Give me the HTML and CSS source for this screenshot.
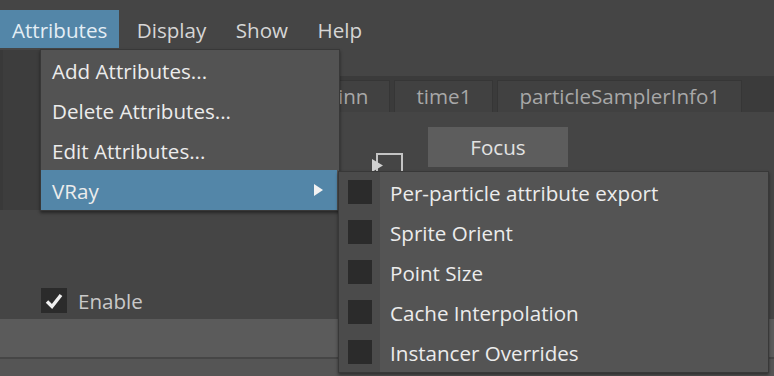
FILE: index.html
```html
<!DOCTYPE html>
<html>
<head>
<meta charset="utf-8">
<link rel="stylesheet" href="styles.css">
</head>
<body>
<div class="app">
  <nav class="menubar">
    <span class="mb-item active">Attributes</span>
    <span class="mb-item">Display</span>
    <span class="mb-item">Show</span>
    <span class="mb-item">Help</span>
  </nav>

  <div class="workspace">
    <aside class="side-panel"></aside>
    <div class="editor">
      <div class="tabbar">
        <span class="tab tab-first">inn</span>
        <span class="tab">time1</span>
        <span class="tab">particleSamplerInfo1</span>
      </div>
      <div class="toolrow">
        <svg class="sel-icon" width="32" height="20" viewBox="0 0 32 20">
          <path d="M5 20 V1 H30 V20" fill="none" stroke="#c4c4c4" stroke-width="2"/>
          <polygon points="0,6 11,12.5 0,19" fill="#d0d0d0"/>
        </svg>
        <button class="focus-btn">Focus</button>
      </div>
    </div>
  </div>

  <div class="enable-row">
    <span class="checkbox checked">
      <svg width="20" height="20" viewBox="0 0 20 20">
        <path d="M3 10.5 L8 15.5 L17 4" fill="none" stroke="#f0f0f0" stroke-width="3.4"/>
      </svg>
    </span>
    <span class="enable-label">Enable</span>
  </div>
  <div class="band-light"></div>
  <div class="band-line"></div>
  <div class="band-bottom"></div>

  <div class="menu main-menu">
    <div class="menu-item">Add Attributes...</div>
    <div class="menu-item">Delete Attributes...</div>
    <div class="menu-item">Edit Attributes...</div>
    <div class="menu-item highlighted">VRay<span class="arrow"></span></div>
  </div>

  <div class="menu sub-menu">
    <div class="sub-item"><span class="box"></span><span class="sub-label">Per-particle attribute export</span></div>
    <div class="sub-item"><span class="box"></span><span class="sub-label">Sprite Orient</span></div>
    <div class="sub-item"><span class="box"></span><span class="sub-label">Point Size</span></div>
    <div class="sub-item"><span class="box"></span><span class="sub-label">Cache Interpolation</span></div>
    <div class="sub-item"><span class="box"></span><span class="sub-label">Instancer Overrides</span></div>
  </div>
</div>
</body>
</html>
```

FILE: styles.css
```css
* { box-sizing: border-box; }
html, body {
  margin: 0;
  padding: 0;
  background: #454545;
  width: 774px;
  height: 376px;
  overflow: hidden;
}
.app {
  position: relative;
  width: 774px;
  height: 376px;
  font-family: "Open Sans", "Noto Sans", sans-serif;
  font-size: 20.6px;
  color: #dcdcdc;
}

/* Menu bar */
.menubar {
  display: flex;
  gap: 6px;
  padding-top: 10px;
  height: 48px;
}
.mb-item {
  height: 38px;
  line-height: 36px;
  padding: 2px 11.5px 0 12px;
  color: #d6d6d6;
}
.mb-item.active {
  background: #5386a8;
  color: #e4eef5;
}

/* Workspace */
.workspace {
  display: flex;
  height: 162px;
}
.side-panel {
  width: 40px;
  height: 160px;
  margin-top: 2px;
  background: #3d3d3d;
  border-left: 3px solid #393939;
}
.editor {
  flex: 1;
  display: flex;
  flex-direction: column;
}
.tabbar {
  margin-top: 28px;
  height: 36px;
  background: #3b3b3b;
  display: flex;
  align-items: flex-end;
  gap: 4px;
  padding-left: 276px;
}
.tab {
  height: 32px;
  line-height: 30px;
  padding: 0 21px;
  background: #414141;
  border: 1px solid #363636;
  border-bottom: none;
  color: #a8a8a8;
  white-space: nowrap;
}
.toolrow {
  display: flex;
  align-items: flex-start;
  padding-top: 15px;
  padding-left: 332px;
}
.sel-icon {
  display: block;
  margin-top: 26px;
}
.focus-btn {
  margin-left: 24px;
  width: 140px;
  height: 40px;
  border: none;
  background: #5d5d5d;
  color: #e2e2e2;
  font-family: inherit;
  font-size: 20.6px;
  padding: 0;
}

/* Enable row */
.enable-row {
  display: flex;
  align-items: center;
  gap: 11px;
  margin-top: 78px;
  height: 25px;
  padding-left: 41px;
}
.checkbox {
  width: 26px;
  height: 25px;
  background: #2b2b2b;
  display: flex;
  align-items: center;
  justify-content: center;
}
.checkbox svg { display: block; }
.enable-label {
  color: #c9c9c9;
  line-height: 25px;
  padding-top: 2px;
}
.band-light {
  margin-top: 6px;
  height: 38px;
  background: #5b5b5b;
}
.band-line {
  height: 2px;
  background: #464646;
}
.band-bottom {
  height: 20px;
  background: #555555;
}

/* Menus */
.menu {
  position: absolute;
  background: #535353;
  border: 1px solid #383838;
  box-shadow: 0 2px 3px rgba(0,0,0,0.45);
}
.main-menu {
  left: 40px;
  top: 49px;
  width: 300px;
}
.menu-item {
  position: relative;
  height: 40px;
  line-height: 38px;
  padding: 2px 0 0 11px;
  color: #ececec;
}
.menu-item.highlighted {
  background: #5386a8;
  margin-right: 2px;
}
.arrow {
  position: absolute;
  left: 273px;
  top: 14px;
  width: 0;
  height: 0;
  border-top: 6.5px solid transparent;
  border-bottom: 6.5px solid transparent;
  border-left: 9px solid #f2f2f2;
}
.sub-menu {
  left: 338px;
  top: 171px;
  width: 431px;
  background: linear-gradient(to right, #4b4b4b 0, #4b4b4b 41px, #545454 41px);
}
.sub-item {
  display: flex;
  align-items: center;
  height: 40px;
}
.box {
  width: 24px;
  height: 24px;
  margin-left: 9px;
  background: #2b2b2b;
}
.sub-label {
  margin-left: 18px;
  padding-top: 2px;
  color: #ececec;
  white-space: nowrap;
}
```
